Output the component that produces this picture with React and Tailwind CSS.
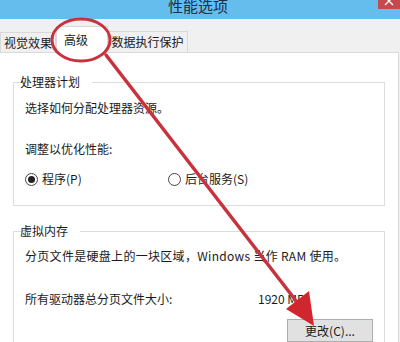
import React from "react";

const font = { fontFamily: '"Noto Sans CJK SC", "Noto Sans", sans-serif' };

function Radio({ checked, label }) {
  return (
    <div className="flex items-center gap-[4px]">
      <div className="w-[13px] h-[13px] rounded-full border border-[#444] bg-white flex items-center justify-center">
        {checked && <div className="w-[7px] h-[7px] rounded-full bg-[#222]" />}
      </div>
      <span>{label}</span>
    </div>
  );
}

export default function App() {
  return (
    <div
      className="w-[400px] h-[342px] relative overflow-hidden bg-[#f0f0f0] text-[12px] leading-[16px] text-[#1a1a1a] flex flex-col"
      style={font}
    >
      {/* title bar */}
      <div className="h-[19px] bg-[#65bdee] flex items-start shrink-0">
        <div className="pl-[168px] flex-1 -mt-[4px] text-[15px] leading-[20px] text-[#1d2f40]">
          性能选项
        </div>
        <div className="w-[22px] h-[9px] bg-[#c6494b] flex items-start justify-center overflow-hidden">
          <svg width="10" height="9" viewBox="0 0 10 9">
            <path d="M1 -3 L9 5 M9 -3 L1 5" stroke="#fff" strokeWidth="1.3" fill="none" />
          </svg>
        </div>
      </div>

      {/* tab strip */}
      <div className="h-[34px] flex items-end shrink-0 relative z-10">
        <div className="w-[56px] h-[20px] border border-b-0 border-[#d9d9d9] bg-[#f0f0f0] flex items-center justify-center mb-px">
          视觉效果
        </div>
        <div className="w-[52px] h-[27px] border border-b-0 border-[#d9d9d9] bg-white flex items-start justify-center pt-[5px] pr-[12px]">
          高级
        </div>
        <div className="w-[80px] h-[21px] border border-b-0 border-l-0 border-[#d9d9d9] bg-[#f0f0f0] flex items-center justify-center mb-px">
          数据执行保护
        </div>
      </div>

      {/* panel */}
      <div className="w-[399px] flex-1 bg-white border-t border-r border-[#d9d9d9] -mt-px pt-[21px] px-[13px] flex flex-col gap-[17px]">
        <fieldset className="border border-[#dcdcdc] pl-[11px] pb-[18px] m-0">
          <legend className="ml-[5px] px-[1px] -translate-x-[11px]">处理器计划</legend>
          <div className="mt-[10px]">选择如何分配处理器资源。</div>
          <div className="mt-[25px]">调整以优化性能:</div>
          <div className="mt-[14px] flex">
            <div className="w-[143px]">
              <Radio checked label="程序(P)" />
            </div>
            <Radio label="后台服务(S)" />
          </div>
        </fieldset>

        <fieldset className="border border-[#dcdcdc] pl-[11px] pb-[20px] m-0">
          <legend className="ml-[5px] px-[1px] -translate-x-[11px]">虚拟内存</legend>
          <div className="mt-[9px] tracking-[0.3px]">分页文件是硬盘上的一块区域，Windows 当作 RAM 使用。</div>
          <div className="mt-[27px] flex">
            <div className="w-[233px]">所有驱动器总分页文件大小:</div>
            <div>1920 MB</div>
          </div>
          <div className="mt-[12px] flex">
            <div className="ml-[262px] w-[86px] h-[23px] bg-[#e1e1e1] border border-[#adadad] flex items-center justify-center">
              更改(C)...
            </div>
          </div>
        </fieldset>
      </div>

      {/* red annotation overlay */}
      <svg className="absolute inset-0 z-20 pointer-events-none" width="400" height="342" viewBox="0 0 400 342">
        <ellipse cx="81" cy="40" rx="29" ry="21" fill="none" stroke="#c8323c" strokeWidth="3" />
        <line x1="106" y1="55" x2="300" y2="306" stroke="#c8323c" strokeWidth="3.5" strokeLinecap="round" />
        <polygon points="314,326 286,309 309,291" fill="#d0262e" />
      </svg>
    </div>
  );
}
